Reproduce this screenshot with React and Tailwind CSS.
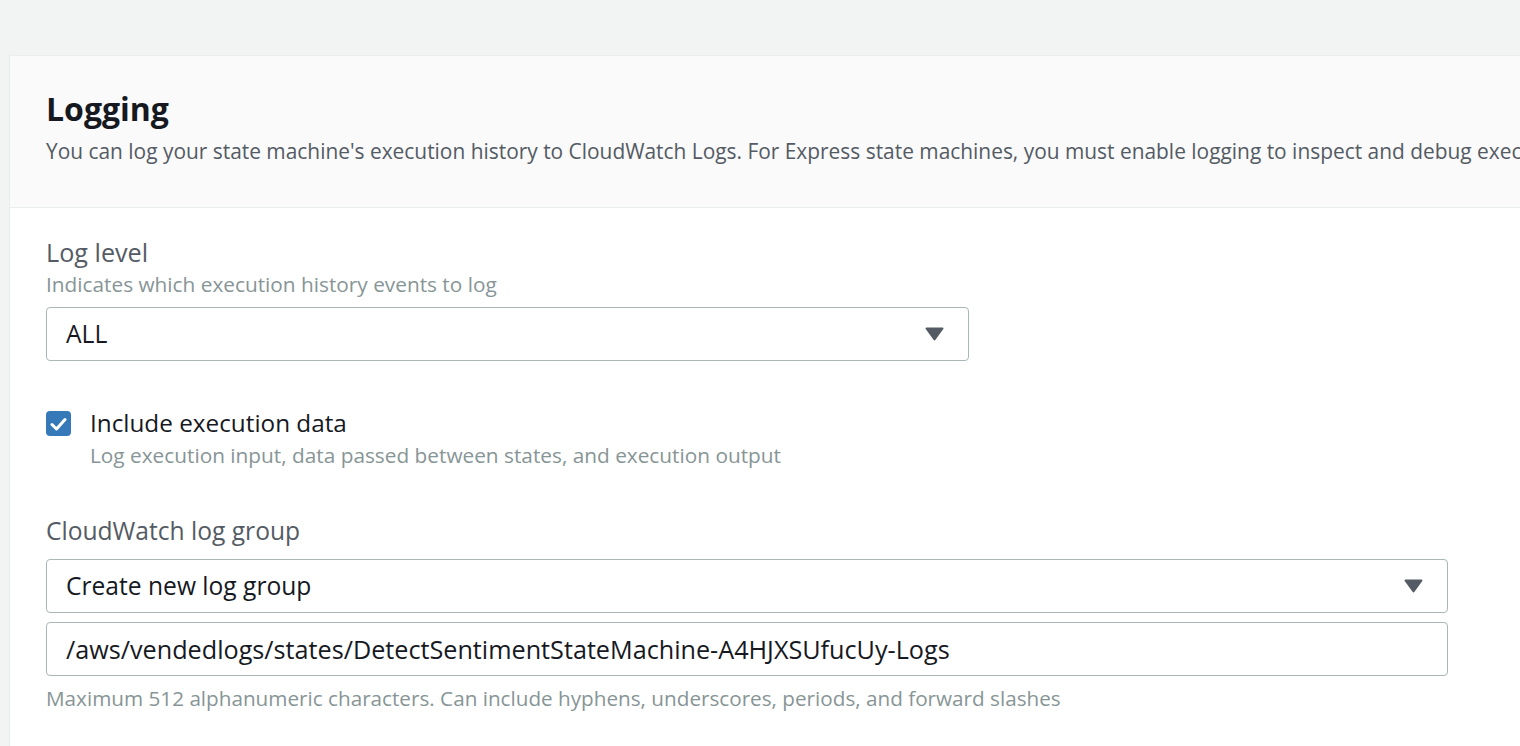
import React from "react";

function Caret() {
  return (
    <svg width="19" height="14" viewBox="0 0 19 14" className="shrink-0">
      <polygon
        points="1.5,1.5 17.5,1.5 9.5,12.5"
        fill="#545b64"
        stroke="#545b64"
        strokeWidth="2"
        strokeLinejoin="round"
      />
    </svg>
  );
}

function Select({ value, width }) {
  return (
    <div
      className={`${width} h-[54px] flex items-center justify-between border border-[#aab7b8] rounded-[4px] bg-white pl-[19px] pr-[24px]`}
    >
      <span className="text-[24.6px] leading-[32px] text-[#16191f]">{value}</span>
      <Caret />
    </div>
  );
}

export default function App() {
  return (
    <div className="min-h-[746px] overflow-hidden bg-[#f2f3f3] pt-[55px] pl-[9px] font-['Open_Sans',sans-serif]">
      <div className="min-h-[691px] border-l border-t border-[#eaeded] bg-white">
        <div className="border-b border-[#eaeded] bg-[#fafafa] pl-[36px] pt-[33px] pb-[42px]">
          <h2 className="text-[32px] leading-[40px] font-bold text-[#16191f]">Logging</h2>
          <p className="mt-[8px] whitespace-nowrap text-[20.9px] leading-[28px] text-[#545b64]">
            You can log your state machine's execution history to CloudWatch Logs. For Express state machines, you must
            enable logging to inspect and debug executions.
          </p>
        </div>

        <div className="pl-[36px] pt-[28px] pb-[40px]">
          <div className="text-[25.2px] leading-[32px] text-[#545b64]">Log level</div>
          <div className="mt-[2px] text-[20.8px] leading-[28px] text-[#879596]">
            Indicates which execution history events to log
          </div>
          <div className="mt-[9px]">
            <Select value="ALL" width="w-[923px]" />
          </div>

          <div className="mt-[46px] flex items-start gap-[19px]">
            <div className="mt-[4px] flex h-[25px] w-[25px] shrink-0 items-center justify-center rounded-[4px] bg-[#3579b8]">
              <svg width="17" height="14" viewBox="0 0 17 14">
                <path
                  d="M2 7.5 L6.5 12 L15 2.5"
                  fill="none"
                  stroke="#ffffff"
                  strokeWidth="3"
                  strokeLinecap="round"
                  strokeLinejoin="round"
                />
              </svg>
            </div>
            <div>
              <div className="text-[24.3px] leading-[32px] text-[#16191f]">Include execution data</div>
              <div className="mt-[2px] text-[20.8px] leading-[28px] text-[#879596]">
                Log execution input, data passed between states, and execution output
              </div>
            </div>
          </div>

          <div className="mt-[46px] text-[24.6px] leading-[32px] text-[#545b64]">CloudWatch log group</div>
          <div className="mt-[12px] flex flex-col gap-[9px]">
            <Select value="Create new log group" width="w-[1402px]" />
            <div className="flex h-[54px] w-[1402px] items-center rounded-[4px] border border-[#aab7b8] bg-white pl-[19px]">
              <span className="text-[25.2px] leading-[32px] text-[#16191f]">
                /aws/vendedlogs/states/DetectSentimentStateMachine-A4HJXSUfucUy-Logs
              </span>
            </div>
          </div>
          <div className="mt-[8px] text-[20.7px] leading-[28px] text-[#879596]">
            Maximum 512 alphanumeric characters. Can include hyphens, underscores, periods, and forward slashes
          </div>
        </div>
      </div>
    </div>
  );
}
